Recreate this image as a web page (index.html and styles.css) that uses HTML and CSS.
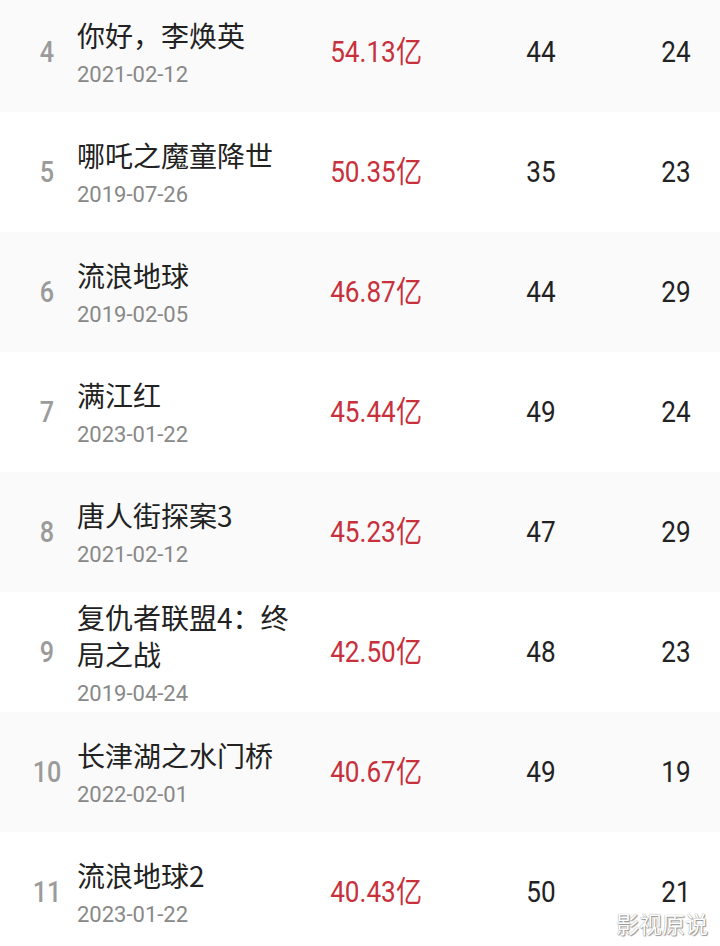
FILE: index.html
```html
<!DOCTYPE html>
<html lang="zh-CN">
<head>
    <meta charset="UTF-8">
    <meta name="viewport" content="width=device-width, initial-scale=1.0">
    <title>票房榜</title>
    <link rel="stylesheet" href="styles.css">
</head>
<body>
    <section class="board">
        <ul class="rank-list">
            <li class="row">
                <span class="rank">4</span>
                <div class="info">
                    <p class="title">你好，李焕英</p>
                    <p class="date">2021-02-12</p>
                </div>
                <span class="gross">54.13亿</span>
                <span class="num">44</span>
                <span class="num">24</span>
            </li>
            <li class="row">
                <span class="rank">5</span>
                <div class="info">
                    <p class="title">哪吒之魔童降世</p>
                    <p class="date">2019-07-26</p>
                </div>
                <span class="gross">50.35亿</span>
                <span class="num">35</span>
                <span class="num">23</span>
            </li>
            <li class="row">
                <span class="rank">6</span>
                <div class="info">
                    <p class="title">流浪地球</p>
                    <p class="date">2019-02-05</p>
                </div>
                <span class="gross">46.87亿</span>
                <span class="num">44</span>
                <span class="num">29</span>
            </li>
            <li class="row">
                <span class="rank">7</span>
                <div class="info">
                    <p class="title">满江红</p>
                    <p class="date">2023-01-22</p>
                </div>
                <span class="gross">45.44亿</span>
                <span class="num">49</span>
                <span class="num">24</span>
            </li>
            <li class="row">
                <span class="rank">8</span>
                <div class="info">
                    <p class="title">唐人街探案3</p>
                    <p class="date">2021-02-12</p>
                </div>
                <span class="gross">45.23亿</span>
                <span class="num">47</span>
                <span class="num">29</span>
            </li>
            <li class="row">
                <span class="rank">9</span>
                <div class="info">
                    <p class="title">复仇者联盟4：终局之战</p>
                    <p class="date">2019-04-24</p>
                </div>
                <span class="gross">42.50亿</span>
                <span class="num">48</span>
                <span class="num">23</span>
            </li>
            <li class="row">
                <span class="rank">10</span>
                <div class="info">
                    <p class="title">长津湖之水门桥</p>
                    <p class="date">2022-02-01</p>
                </div>
                <span class="gross">40.67亿</span>
                <span class="num">49</span>
                <span class="num">19</span>
            </li>
            <li class="row">
                <span class="rank">11</span>
                <div class="info">
                    <p class="title">流浪地球2</p>
                    <p class="date">2023-01-22</p>
                </div>
                <span class="gross">40.43亿</span>
                <span class="num">50</span>
                <span class="num">21</span>
            </li>
        </ul>
    </section>

    <div class="watermark">影视原说</div>
</body>
</html>
```

FILE: styles.css
```css
*,::before,::after {
    box-sizing: border-box;
}
body {
    margin: 0;
    padding: 0;
    background-color: #fff;
    font-family: 'Noto Sans CJK SC', 'Noto Sans', sans-serif;
    color: #222;
    overflow: hidden;
}
p, ul {
    margin: 0;
}
ul {
    padding: 0;
    list-style: none;
}
.board {
    position: relative;
}
.rank-list {
    margin-top: -8px;
}
.row {
    display: grid;
    grid-template-columns: 38px 236px 148px 182px 1fr;
    align-items: center;
    height: 120px;
    padding-left: 28px;
}
.row:nth-child(odd) {
    background-color: #fafafa;
}
/* the app uses a narrow digit face, so squeeze Roboto a bit */
.rank, .gross, .num {
    font-family: 'Roboto', sans-serif;
    font-size: 30px;
    line-height: 1;
    text-align: center;
    transform: scaleX(.87);
}
.rank {
    color: #9b9b9b;
    font-weight: 500;
    transform: scaleX(.84);
}
.info {
    padding-left: 11px;
    padding-top: 4px;
}
.title {
    font-size: 28px;
    line-height: 37px;
    color: #222;
}
.date {
    font-family: 'Roboto', sans-serif;
    font-size: 22px;
    line-height: 33px;
    margin-top: 4px;
    color: #888;
}
.gross {
    color: #c8303c;
}
.num {
    color: #222;
}
.watermark {
    position: absolute;
    right: 12px;
    bottom: 8px;
    font-size: 23px;
    line-height: 30px;
    color: #fff;
    text-shadow: 0 0 1px #777, 1px 1px 1px #999;
}
```
